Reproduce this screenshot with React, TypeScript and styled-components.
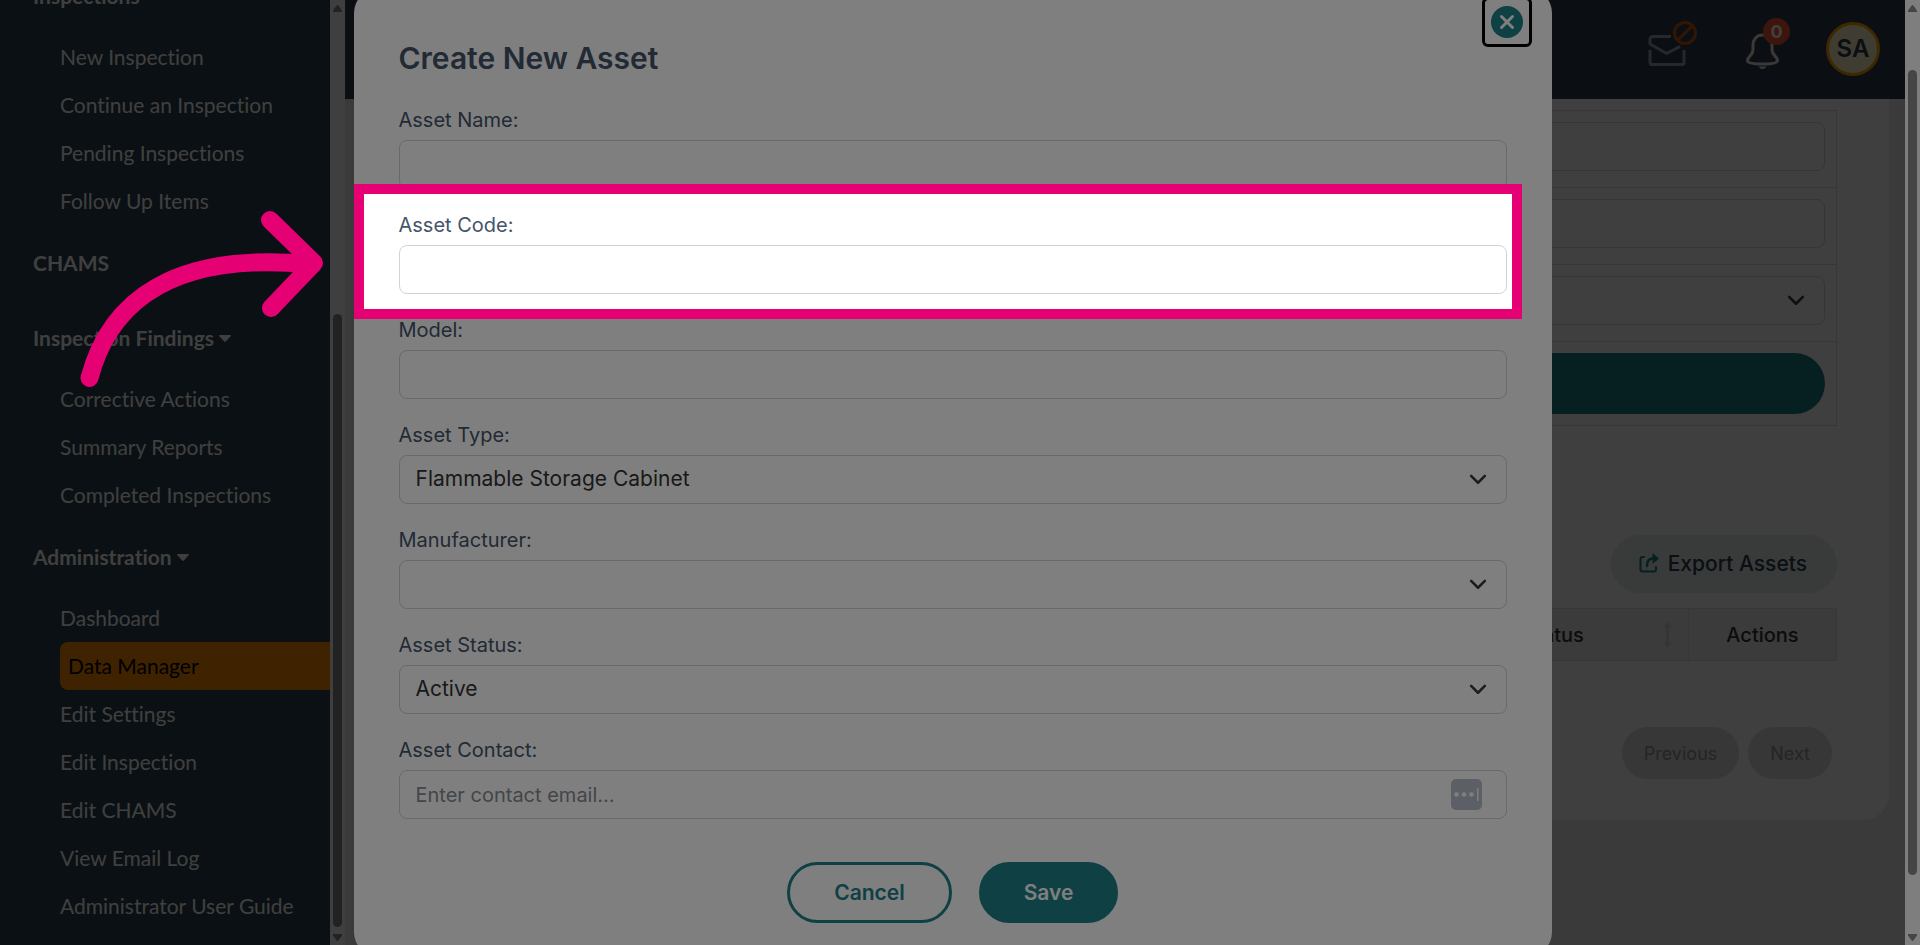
import React from 'react';
import styled, { createGlobalStyle, css } from 'styled-components';

const ui = '"Inter", "Liberation Sans", sans-serif';
const teal = '#1d8089';

const GlobalStyle = createGlobalStyle`
  *, *::before, *::after { box-sizing: border-box; }
  html, body { margin: 0; height: 100%; overflow: hidden; }
  body { font-family: ${ui}; font-size: 20px; color: #333; background: #e8e8e8; }
  button, input, select { font: inherit; color: inherit; margin: 0; }
`;

const Page = styled.div`
  display: flex;
  height: 100vh;
  overflow: hidden;
`;

const Shell = styled.div`
  position: relative;
  display: flex;
  flex: 1;
  min-width: 0;
`;

/* Scroll bars */

const Track = styled.div`
  flex: none;
  width: 15px;
  display: flex;
  flex-direction: column;
  align-items: center;
  padding: 5px 0 4px;
  background: #fcfcfc;
`;

const Thumb = styled.div<{ $size: number }>`
  width: 9px;
  border-radius: 5px;
  background: #8b8b8b;
  flex: ${(p) => p.$size} 1 0;
`;

const Space = styled.div<{ $size: number }>`
  flex: ${(p) => p.$size} 1 0;
`;

const TrackArrow = styled.svg`
  flex: none;
  width: 9px;
  height: 7px;
  fill: #8b8b8b;
`;

function ScrollTrack({ before, size, after }: { before: number; size: number; after: number }) {
  return (
    <Track aria-hidden="true">
      <TrackArrow viewBox="0 0 9 7"><path d="M3.6 .6q.9-1 1.8 0L9 5.4V7H0V5.4z" /></TrackArrow>
      <Space $size={before} />
      <Thumb $size={size} />
      <Space $size={after} />
      <TrackArrow viewBox="0 0 9 7"><path d="M3.6 6.4q.9 1 1.8 0L9 1.6V0H0v1.6z" /></TrackArrow>
    </Track>
  );
}

/* Sidebar */

const Sidebar = styled.aside`
  flex: none;
  width: 345px;
  display: flex;
  background: #28404c;
`;

const Nav = styled.nav`
  flex: 1;
  min-width: 0;
  overflow: hidden;
  display: flex;
  flex-direction: column;
  justify-content: flex-end;
  padding-bottom: 15px;
  font-family: "Lato", sans-serif;
  font-size: 21px;
  font-variant-ligatures: none;
  color: #fff;
`;

const headingStyle = css`
  flex: none;
  display: flex;
  align-items: center;
  gap: 5px;
  height: 75px;
  padding: 0 0 0 33px;
  border: 0;
  background: none;
  color: inherit;
  font-weight: 700;
  text-decoration: none;
`;

const GroupButton = styled.button`
  ${headingStyle}
  font-variant-ligatures: none;
`;
const GroupLink = styled.a`${headingStyle}`;

const Caret = styled.svg`
  width: 12px;
  height: 9px;
  fill: currentColor;
`;

const NavList = styled.ul`
  flex: none;
  list-style: none;
  margin: 0;
  padding: 0 0 0 60px;
`;

const NavLink = styled.a<{ $active?: boolean }>`
  display: block;
  line-height: 48px;
  color: inherit;
  text-decoration: none;
  white-space: nowrap;
  ${(p) => p.$active && css`
    padding-left: 8px;
    border-radius: 8px 0 0 8px;
    background: #ff8a00;
    color: #000;
  `}
`;

const groups = [
  { title: 'Inspections', items: ['New Inspection', 'Continue an Inspection', 'Pending Inspections', 'Follow Up Items'] },
  { title: 'CHAMS', items: [] },
  { title: 'Inspection Findings', items: ['Corrective Actions', 'Summary Reports', 'Completed Inspections'] },
  {
    title: 'Administration',
    items: ['Dashboard', 'Data Manager', 'Edit Settings', 'Edit Inspection', 'Edit CHAMS', 'View Email Log', 'Administrator User Guide'],
  },
];

function SideNav() {
  return (
    <Nav>
      {groups.map((g) => (
        <React.Fragment key={g.title}>
          {g.items.length === 0 ? (
            <GroupLink href="#">{g.title}</GroupLink>
          ) : (
            <>
              <GroupButton type="button" aria-expanded="true">
                {g.title}
                <Caret viewBox="0 0 12 9"><path d="M.8 2h10.4q1.200.3.4 1.300L6.800 8.600q-.8.7-1.600 0L.4 3.300Q-.4 2.300.8 2z" /></Caret>
              </GroupButton>
              <NavList>
                {g.items.map((t) => (
                  <li key={t}>
                    <NavLink href="#" $active={t === 'Data Manager'}>{t}</NavLink>
                  </li>
                ))}
              </NavList>
            </>
          )}
        </React.Fragment>
      ))}
    </Nav>
  );
}

/* Main page */

const Main = styled.main`
  flex: 1;
  min-width: 0;
  overflow: hidden;
  background: #e8e8e8;
`;

const TopBar = styled.header`
  display: flex;
  align-items: center;
  justify-content: flex-end;
  gap: 34px;
  height: 99px;
  padding: 0 25px 2px;
  background: #2c3c50;
`;

const IconButton = styled.button`
  position: relative;
  display: flex;
  padding: 0;
  border: 0;
  background: none;
`;

const IconArt = styled.svg`
  display: block;
  height: 64px;
  fill: none;
  stroke-width: 3;
  stroke-linecap: round;
  stroke-linejoin: round;
`;

const Badge = styled.span`
  position: absolute;
  top: 1px;
  left: 19px;
  width: 27px;
  height: 27px;
  border-radius: 50%;
  background: #f5562c;
  color: #fff;
  font-size: 18px;
  font-weight: 700;
  line-height: 27px;
  text-align: center;
`;

const Avatar = styled.button`
  width: 54px;
  height: 54px;
  padding: 0;
  border: 3px solid #f5a300;
  border-radius: 50%;
  background: #fdf3c8;
  color: #2c3c50;
  font-size: 24px;
  font-weight: 600;
`;

const Card = styled.section`
  margin: 0 16px;
  padding: 11px 52px 41px;
  border-radius: 0 0 26px 26px;
  background: #fdfdfd;
`;

const Filters = styled.form`
  border: 1px solid #dfdfdf;
`;

const FilterRow = styled.div`
  padding: 11px 11px 16px;
  border-bottom: 1px solid #dfdfdf;

  &:last-child {
    padding-bottom: 11px;
    border-bottom: 0;
  }
`;

const boxStyle = css`
  display: block;
  width: 100%;
  height: 49px;
  padding: 0 16px;
  border: 1px solid #ced4da;
  border-radius: 8px;
  background: transparent;
  outline: 0;
`;

const TextBox = styled.input`
  ${boxStyle}
  &::placeholder { color: #868c94; opacity: 1; }
`;

const SelectBox = styled.select`
  ${boxStyle}
  appearance: none;
  padding-bottom: 2px;
  font-size: 21px;
`;

const Control = styled.div`
  position: relative;
`;

const Chevron = styled.svg`
  position: absolute;
  top: 14px;
  right: 19px;
  width: 20px;
  height: 20px;
  fill: none;
  stroke: #343a40;
  stroke-width: 2;
  stroke-linecap: round;
  stroke-linejoin: round;
  pointer-events: none;
`;

function Select({ id, label, options }: { id: string; label?: string; options: string[] }) {
  return (
    <Control>
      <SelectBox id={id} aria-label={label}>
        {options.map((o) => <option key={o}>{o}</option>)}
      </SelectBox>
      <Chevron viewBox="0 0 16 16"><path d="m2.5 5.5 5.5 5.5 5.5-5.5" /></Chevron>
    </Control>
  );
}

const SearchButton = styled.button`
  display: block;
  width: 100%;
  height: 61px;
  border: 0;
  border-radius: 31px;
  background: #1a8285;
`;

const TableActions = styled.div`
  display: flex;
  justify-content: flex-end;
  margin: 109px 0 15px;
`;

const ExportButton = styled.button`
  display: flex;
  align-items: center;
  gap: 9px;
  height: 58px;
  padding: 0 30px 2px 28px;
  border: 0;
  border-radius: 29px;
  background: #e4efe9;
  color: #2c3c50;
  font-size: 21px;
  font-weight: 500;
`;

const ExportIcon = styled.svg`
  width: 20px;
  height: 20px;
  fill: none;
  stroke: #12807f;
  stroke-width: 2;
  stroke-linecap: round;
`;

const AssetTable = styled.table`
  width: 100%;
  border-collapse: collapse;
  table-layout: fixed;
`;

const HeadCell = styled.th<{ $width?: number }>`
  width: ${(p) => (p.$width ? `${p.$width}px` : 'auto')};
  height: 52px;
  padding: 0 16px;
  border: 1px solid #dfdfe2;
  background: #ececf2;
  color: #333;
  font-weight: 500;
`;

const Sortable = styled.div`
  display: grid;
  grid-template-columns: 1fr auto 1fr;
  align-items: center;
`;

const SortIcon = styled.svg`
  grid-column: 3;
  justify-self: end;
  width: 9px;
  height: 26px;
  fill: #d6d6da;
`;

const SortLabel = styled.span`
  grid-column: 2;
`;

const Pager = styled.div`
  display: flex;
  justify-content: flex-end;
  gap: 9px;
  margin-top: 66px;
  padding-right: 5px;
`;

const PagerButton = styled.button`
  height: 52px;
  padding: 0 22px;
  border: 0;
  border-radius: 26px;
  background: #dcdcdc;
  color: #949494;
  font-size: 18px;
`;

/* Dialog */

const Backdrop = styled.div`
  position: absolute;
  inset: 0;
  z-index: 1;
  display: flex;
  align-items: center;
  justify-content: center;
  background: rgba(0, 0, 0, 0.5);
`;

const Dialog = styled.form`
  position: relative;
  flex: none;
  width: 100%;
  max-width: 1198px;
  padding: 49px 45px 33px;
  border-radius: 24px;
  background: #fff;
`;

const Title = styled.h1`
  margin: 0 0 29px;
  color: #44546a;
  font-size: 30px;
  font-weight: 600;
  line-height: 40px;
`;

const CloseButton = styled.button`
  position: absolute;
  top: 8px;
  right: 20px;
  display: flex;
  padding: 6px;
  border: 3px solid #000;
  border-radius: 6px;
  background: #fff;
`;

const CloseIcon = styled.svg`
  width: 32px;
  height: 32px;
  stroke: #fff;
  stroke-width: 4;
  stroke-linecap: round;
`;

const Fields = styled.div`
  display: flex;
  flex-direction: column;
  gap: 23px;
`;

const Field = styled.div`
  position: relative;
`;

const Label = styled.label`
  display: block;
  width: max-content;
  margin-bottom: 6px;
  color: #44546a;
  line-height: 27px;
`;

const Filler = styled.svg`
  position: absolute;
  top: 9px;
  right: 25px;
  width: 31px;
  height: 31px;
`;

const Spotlight = styled.div`
  position: absolute;
  inset: -28px -15px -25px -45px;
  z-index: 1;
  border: 10px solid #e50073;
  box-shadow: 0 0 0 9999px rgba(0, 0, 0, 0.5);
  pointer-events: none;
`;

const Pointer = styled.svg`
  position: absolute;
  top: 14px;
  right: calc(100% + 34px);
  width: 250px;
  height: 180px;
  fill: none;
  stroke: #e50073;
  stroke-width: 18;
  stroke-linecap: round;
  stroke-linejoin: round;
`;

const Buttons = styled.div`
  display: flex;
  justify-content: center;
  gap: 27px;
  margin-top: 43px;
`;

const ActionButton = styled.button<{ $solid?: boolean }>`
  width: ${(p) => (p.$solid ? 139 : 165)}px;
  height: 61px;
  border: 3px solid ${teal};
  border-radius: 31px;
  background: ${(p) => (p.$solid ? teal : 'transparent')};
  color: ${(p) => (p.$solid ? '#fff' : teal)};
  font-size: 21px;
  font-weight: 600;
`;

function AssetDialog() {
  return (
    <Backdrop>
      <Dialog role="dialog" aria-labelledby="dialog-title">
        <CloseButton type="button" aria-label="Close">
          <CloseIcon viewBox="0 0 32 32">
            <circle cx="16" cy="16" r="16" fill={teal} stroke="none" />
            <path d="m10.500 10.500 11 11M21.500 10.500l-11 11" strokeWidth="3" />
          </CloseIcon>
        </CloseButton>
        <Title id="dialog-title">Create New Asset</Title>
        <Fields>
          <Field>
            <Label htmlFor="name">Asset Name:</Label>
            <TextBox id="name" />
          </Field>
          <Field>
            <Label htmlFor="code">Asset Code:</Label>
            <TextBox id="code" />
            <Spotlight>
              <Pointer viewBox="80 208 250 180">
                <path d="M89.500 378C110 300 175 252 308 264" />
                <path d="m270 220 44 43-43 45" />
              </Pointer>
            </Spotlight>
          </Field>
          <Field>
            <Label htmlFor="model">Model:</Label>
            <TextBox id="model" />
          </Field>
          <Field>
            <Label htmlFor="type">Asset Type:</Label>
            <Select id="type" options={['Flammable Storage Cabinet']} />
          </Field>
          <Field>
            <Label htmlFor="maker">Manufacturer:</Label>
            <Select id="maker" options={['']} />
          </Field>
          <Field>
            <Label htmlFor="status">Asset Status:</Label>
            <Select id="status" options={['Active']} />
          </Field>
          <Field>
            <Label htmlFor="contact">Asset Contact:</Label>
            <Control>
              <TextBox id="contact" type="email" placeholder="Enter contact email..." />
              <Filler viewBox="0 0 31 31">
                <rect width="31" height="31" rx="5" fill="#b8bfcc" />
                <g fill="#fff">
                  <circle cx="5.500" cy="15.500" r="2.300" />
                  <circle cx="13" cy="15.500" r="2.300" />
                  <circle cx="20.500" cy="15.500" r="2.300" />
                  <rect x="26" y="9" width="1.500" height="13" />
                </g>
              </Filler>
            </Control>
          </Field>
        </Fields>
        <Buttons>
          <ActionButton type="button">Cancel</ActionButton>
          <ActionButton type="submit" $solid>Save</ActionButton>
        </Buttons>
      </Dialog>
    </Backdrop>
  );
}

export default function App() {
  return (
    <Page>
      <GlobalStyle />
      <Shell>
        <Sidebar>
          <SideNav />
          <ScrollTrack before={302} size={613} after={7} />
        </Sidebar>
        <Main>
          <TopBar>
            <IconButton type="button" aria-label="Messages">
              <IconArt width="62" viewBox="0 0 62 64" stroke="#98a3b8">
                <path strokeLinecap="butt" d="M23 19.500H5q-3 0-3 3V27l16.500 9.500L32 29.500" />
                <path strokeLinecap="butt" d="M2 33v12.500q0 2 2 2h30q2 0 2-2V33" />
                <circle cx="37" cy="16" r="10.500" stroke="#c85a08" />
                <path d="m30 23 14-14" stroke="#c85a08" />
              </IconArt>
            </IconButton>
            <IconButton type="button" aria-label="Notifications">
              <IconArt width="48" viewBox="0 0 48 64" stroke="#efe4df">
                <path d="M18.500 18c-6 0-9.500 4.500-9.500 10v5c0 5.500-5.500 6.500-5.500 10.500 0 2.500 6 3.500 15 3.500s15-1 15-3.500c0-4-5.500-5-5.500-10.500v-5c0-5.500-3.500-10-9.500-10z" />
                <path d="M14.500 49.500h8q-1.500 2.500-4 2.500t-4-2.500z" fill="#efe4df" stroke="none" />
              </IconArt>
              <Badge>0</Badge>
            </IconButton>
            <Avatar type="button">SA</Avatar>
          </TopBar>
          <Card>
            <Filters>
              <FilterRow><TextBox aria-label="Asset name filter" /></FilterRow>
              <FilterRow><TextBox aria-label="Asset code filter" /></FilterRow>
              <FilterRow><Select id="filter" label="Asset status filter" options={['']} /></FilterRow>
              <FilterRow><SearchButton type="button" aria-label="Search" /></FilterRow>
            </Filters>
            <TableActions>
              <ExportButton type="button">
                <ExportIcon viewBox="0 0 20 20">
                  <path d="M5 4H3.500Q1.500 4 1.500 6v10.500q0 2 2 2h11.500q2 0 2-2V14" />
                  <path d="M8 13c0-5 2.500-7.500 6-7.500" strokeWidth="2.500" />
                  <path d="M13.500 0 20 5.500 13.500 11z" fill="#12807f" stroke="none" />
                </ExportIcon>
                Export Assets
              </ExportButton>
            </TableActions>
            <AssetTable>
              <thead>
                <tr>
                  <HeadCell />
                  <HeadCell $width={270}>
                    <Sortable>
                      <SortLabel>Status</SortLabel>
                      <SortIcon viewBox="0 0 9 26"><path d="M4.500 0 9 5.500H6v15h3L4.500 26 0 20.500h3v-15H0z" /></SortIcon>
                    </Sortable>
                  </HeadCell>
                  <HeadCell $width={148}>Actions</HeadCell>
                </tr>
              </thead>
            </AssetTable>
            <Pager>
              <PagerButton type="button">Previous</PagerButton>
              <PagerButton type="button">Next</PagerButton>
            </Pager>
          </Card>
        </Main>
        <AssetDialog />
      </Shell>
      <ScrollTrack before={58} size={805} after={59} />
    </Page>
  );
}
